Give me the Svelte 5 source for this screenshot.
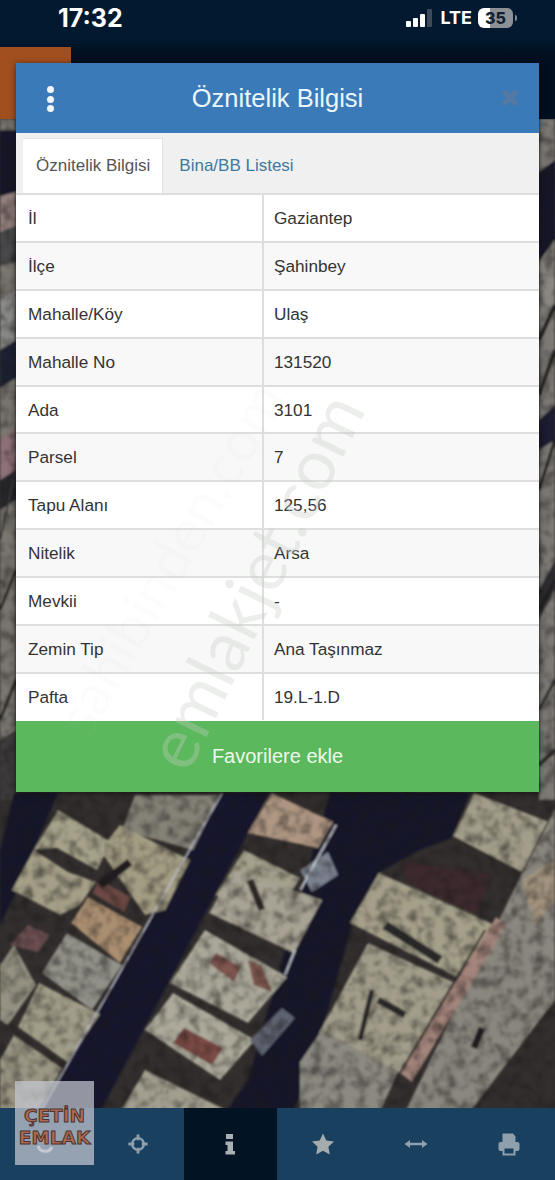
<script>
  const rows = [
    ['İl', 'Gaziantep'],
    ['İlçe', 'Şahinbey'],
    ['Mahalle/Köy', 'Ulaş'],
    ['Mahalle No', '131520'],
    ['Ada', '3101'],
    ['Parsel', '7'],
    ['Tapu Alanı', '125,56'],
    ['Nitelik', 'Arsa'],
    ['Mevkii', '-'],
    ['Zemin Tip', 'Ana Taşınmaz'],
    ['Pafta', '19.L-1.D']
  ];

  // map shapes, page coordinates
  const blocks = [
    // side strips
    ['0,119 16,119 16,800 0,800', '#7a7770'],
    ['539,119 555,119 555,800 539,800', '#7d7a74'],
    ['0,130 16,130 16,196 0,200', '#17172a'],
    ['0,196 16,192 16,226 0,232', '#93807c'],
    ['0,232 16,226 16,262 0,266', '#4a4a4c'],
    ['0,300 16,290 16,340 0,350', '#8a8a88'],
    ['0,350 16,340 16,378 0,388', '#1d2036'],
    ['0,440 16,428 16,470 0,480', '#8d7078'],
    ['0,480 16,470 16,500 0,510', '#26262a'],
    ['0,740 16,730 16,800 0,800', '#3c3a3a'],
    ['539,172 555,160 555,240 539,262', '#15182a'],
    ['539,262 555,240 555,300 539,320', '#8a8781'],
    ['539,420 555,405 555,440 539,450', '#1b1e30'],
    ['539,590 555,560 555,590 539,620', '#2f2f30'],
    // roads and shadow
    ['14,793 58,793 15,895 0,925 0,850', '#14182c'],
    ['222,793 269,793 100,1112 40,1112', '#15172d'],
    ['330,793 470,793 452,838 420,850 380,872 352,925 308,1080 292,1112 226,1112 248,1080', '#15172b'],
    // buildings, right
    ['453,837 474,793 549,822 522,873', '#a39e8a'],
    ['522,873 555,808 555,1000 470,1112 405,1112', '#8a877e'],
    ['522,880 555,860 555,900 535,925', '#a3947f'],
    ['350,923 379,873 495,925 457,977', '#a5a08a'],
    ['319,1033 368,943 455,983 400,1073', '#a39e8b'],
    ['400,1073 496,917 506,925 412,1082', '#a4857c'],
    ['300,1062 322,1030 398,1072 380,1112 300,1112', '#8c8a81'],
    ['400,860 490,875 478,915 410,885', '#3d2b2e'],
    // middle
    ['248,833 272,793 333,822 318,848', '#ae9682'],
    ['216,895 244,850 300,878 270,930', '#a5a18d'],
    ['300,870 328,852 338,875 312,892', '#7c8491'],
    ['209,913 234,870 322,900 294,953', '#a8a394'],
    ['170,983 205,930 287,977 248,1023', '#aba89a'],
    ['145,1030 173,993 255,1040 220,1080', '#adaa9b'],
    ['120,1112 145,1070 230,1112', '#a39f8f'],
    ['173,1043 184,1028 223,1048 212,1065', '#7d4b45'],
    ['209,963 216,953 241,967 234,982', '#80574f'],
    ['248,960 262,966 272,992 254,985', '#80594f'],
    ['250,1040 282,1008 295,1018 262,1056', '#5e6371'],
    // left
    ['135,795 219,795 193,850 122,830', '#858378'],
    ['100,850 120,825 190,860 165,910 145,915', '#a39d83'],
    ['58,810 111,842 97,870 57,848 34,850', '#a7a38b'],
    ['12,890 34,850 68,872 96,882 80,905 60,915', '#a49f87'],
    ['71,923 88,897 142,927 120,963', '#ab8f71'],
    ['92,893 99,880 131,897 124,912', '#6d4a45'],
    ['42,973 67,933 122,965 92,1010', '#939289'],
    ['18,1027 39,983 100,1014 67,1062', '#a19d88'],
    ['0,965 14,945 36,985 8,1025 0,1020', '#959283'],
    ['10,945 28,925 50,935 38,952', '#6a4d50'],
    ['0,1060 14,1035 62,1068 38,1112 0,1112', '#9c9784']
  ];

  const lines = [
    ['222,793 40,1112', '#c3c6d0', 1.5],
    ['336,825 300,890', '#c8ccd4', 2],
    ['295,950 285,975', '#c8ccd4', 2],
    ['522,873 556,806', '#39332f', 1.5],
    ['400,1073 485,930', '#2e2628', 2],
    ['453,837 522,873', '#2f2a28', 2],
    ['378,1000 405,1015', '#2a2a2c', 7],
    ['360,1040 372,990', '#2a2a2c', 5],
    ['250,880 262,910', '#2e2c2c', 7],
    ['482,1028 474,1048', '#211f22', 7],
    ['100,885 130,862', '#211f24', 8],
    ['385,925 440,960', '#2c2a2c', 9],
    ['0,610 16,570', '#222', 3],
    ['0,720 16,680', '#232323', 3],
    ['0,540 16,470', '#3a3a3a', 2],
    ['539,340 555,305', '#1f1f1f', 4],
    ['539,395 555,350', '#222', 4],
    ['539,490 555,440', '#1c1c1c', 3],
    ['539,610 555,580', '#1f1f1f', 3],
    ['539,765 555,750', '#2a2a2a', 4],
    ['539,710 555,680', '#2a2a2a', 3]
  ];
</script>

<div class="page">
  <svg class="map" viewBox="0 0 555 1180" width="555" height="1180" aria-hidden="true">
    <defs>
      <filter id="soft"><feGaussianBlur stdDeviation="1" /></filter>
      <filter id="mottle" x="0" y="0" width="100%" height="100%" color-interpolation-filters="sRGB">
        <feTurbulence type="fractalNoise" baseFrequency="0.09" numOctaves="3" seed="4" />
        <feColorMatrix values="0 0 0 0 0.1  0 0 0 0 0.09  0 0 0 0 0.09  1.2 0 0 0 -0.5" />
        <feGaussianBlur stdDeviation="0.8" />
      </filter>
    </defs>
    <rect width="555" height="1180" fill="#332f2e" />
    <g filter="url(#soft)">
      {#each blocks as [points, fill]}
        <polygon {points} {fill} />
      {/each}
      {#each lines as [points, stroke, width]}
        <polyline {points} {stroke} stroke-width={width} fill="none" />
      {/each}
    </g>
    <rect y="119" width="555" height="990" filter="url(#mottle)" />
  </svg>

  <div class="topbar">
    <span class="topbar__tab"></span>
  </div>

  <div class="status">
    <span class="status__time">17:32</span>
    <div class="status__right">
      <span class="bars"><i></i><i></i><i></i><i></i></span>
      <span class="status__lte">LTE</span>
      <span class="battery">35</span>
      <span class="battery__tip"></span>
    </div>
  </div>

  <section class="modal">
    <header class="modal__head">
      <span class="dots"><i></i><i></i><i></i></span>
      <h1>Öznitelik Bilgisi</h1>
      <svg class="close" viewBox="0 0 20 20" width="20" height="20" aria-hidden="true">
        <path d="M3.5 3.5 16.5 16.5M16.5 3.5 3.5 16.5" stroke="#5579a0" stroke-width="5" />
      </svg>
    </header>

    <div class="tabs">
      <span class="tab tab--active">Öznitelik Bilgisi</span>
      <span class="tab">Bina/BB Listesi</span>
    </div>

    <div class="rows">
      {#each rows as [label, value]}
        <div class="row">
          <span class="label">{label}</span>
          <span class="value">{value}</span>
        </div>
      {/each}
    </div>

    <button type="button">Favorilere ekle</button>
  </section>

  <nav class="nav">
    <span class="nav__item">
      <svg viewBox="0 0 24 24" width="24" height="24" aria-hidden="true">
        <path d="M5 14a7.500 7.500 0 0 0 14 1" fill="none" stroke="#c4cdd4" stroke-width="3" />
      </svg>
    </span>
    <span class="nav__item">
      <svg viewBox="0 0 24 24" width="20" height="20" aria-hidden="true">
        <circle cx="12" cy="12" r="7" fill="none" stroke="#8ea0ae" stroke-width="2.800" />
        <path d="M12 0.500v7M12 16.500v7M0.500 12h7M16.500 12h7" stroke="#8ea0ae" stroke-width="3.400" />
      </svg>
    </span>
    <span class="nav__item nav__item--active">
      <svg viewBox="0 0 24 24" width="24" height="24" aria-hidden="true">
        <path d="M8 2h7v5H8zM7.500 9.500H15V19h2v3.500H7.500V19h2v-6H7.500z" fill="#a9afb2" />
      </svg>
    </span>
    <span class="nav__item">
      <svg viewBox="0 0 24 24" width="24" height="24" aria-hidden="true">
        <path d="M12 1.500 15.300 8.500 23 9.500 17.400 14.800 18.800 22.500 12 18.800 5.200 22.500 6.600 14.800 1 9.500 8.700 8.500z" fill="#a5acaf" />
      </svg>
    </span>
    <span class="nav__item">
      <svg viewBox="0 0 24 24" width="24" height="24" aria-hidden="true">
        <path d="M0.500 12 6 8V10.800H18V8L23.500 12 18 16V13.200H6V16z" fill="#8ea0ae" />
      </svg>
    </span>
    <span class="nav__item">
      <svg viewBox="0 0 24 24" width="24" height="24" aria-hidden="true">
        <path d="M5.500 10V1.500h10.500l2.500 3V10M5.500 19H3.500a2 2 0 0 1-2-2v-5a2 2 0 0 1 2-2h17a2 2 0 0 1 2 2v5a2 2 0 0 1-2 2h-2" fill="#8ea0ae" />
        <path d="M6.500 15.500h11v7h-11z" fill="#1a4060" stroke="#8ea0ae" stroke-width="2" />
      </svg>
    </span>
  </nav>

  <div class="logo">
    <span>ÇETİN</span>
    <span>EMLAK</span>
  </div>

  <div class="mark mark--main">emlakjet.com</div>
  <div class="mark mark--faint">sahibinden.com</div>
</div>

<style>
  :global(body) {
    margin: 0;
    background: #021a30;
  }

  .page {
    position: relative;
    display: flex;
    flex-direction: column;
    width: 555px;
    height: 1180px;
    overflow: hidden;
    font-family: "Liberation Sans", Arial, sans-serif;
  }

  .map {
    position: absolute;
    inset: 0;
  }

  .topbar {
    position: absolute;
    top: 0;
    left: 0;
    width: 100%;
    height: 119px;
    background: linear-gradient(#02192f 0, #02192f 40px, #010f20 54px, #020f1f 100%);
  }

  .topbar__tab {
    position: absolute;
    top: 47px;
    left: 0;
    width: 71px;
    height: 72px;
    background: #a14f1f;
  }

  .status {
    position: relative;
    display: flex;
    justify-content: space-between;
    align-items: center;
    height: 35px;
    margin-bottom: 28px;
    padding: 0 38px 0 58px;
    color: #fff;
  }

  .status__time {
    font-family: Inter, sans-serif;
    font-size: 25px;
    font-weight: 700;
  }

  .status__right {
    display: flex;
    align-items: center;
  }

  .bars {
    display: flex;
    align-items: flex-end;
    gap: 2.500px;
    height: 18px;
    margin-right: 9px;
  }

  .bars i {
    width: 4.500px;
    background: #fff;
    border-radius: 1px;
  }

  .bars i:nth-child(1) { height: 6px; }
  .bars i:nth-child(2) { height: 9px; }
  .bars i:nth-child(3) { height: 13px; }
  .bars i:nth-child(4) { height: 18px; background: #3c4a5a; }

  .status__lte {
    margin-right: 6px;
    font-family: Inter, sans-serif;
    font-size: 18px;
    font-weight: 700;
  }

  .battery {
    width: 35px;
    height: 20px;
    border-radius: 6px;
    background: linear-gradient(90deg, #fff 0 35%, #8d9094 35%);
    color: #10202e;
    font-family: Inter, sans-serif;
    font-size: 16px;
    font-weight: 800;
    line-height: 20px;
    text-align: center;
  }

  .battery__tip {
    width: 2px;
    height: 6px;
    margin-left: 2px;
    background: #7f8a94;
    border-radius: 0 2px 2px 0;
  }

  .modal {
    position: relative;
    display: flex;
    flex-direction: column;
    width: 523px;
    margin-left: 16px;
    box-shadow: 0 1px 6px rgba(0, 0, 0, 0.55);
  }

  .modal__head {
    display: flex;
    align-items: center;
    justify-content: center;
    position: relative;
    height: 70px;
    background: #3a7ab8;
  }

  h1 {
    margin: 0;
    color: #eaf6fb;
    font-size: 25.500px;
    font-weight: 400;
  }

  .dots {
    position: absolute;
    left: 31px;
    top: 23px;
    display: flex;
    flex-direction: column;
    gap: 2.500px;
  }

  .dots i {
    width: 7px;
    height: 7px;
    border-radius: 50%;
    background: #f0f6fa;
  }

  .close {
    position: absolute;
    right: 19px;
    top: 25px;
  }

  .tabs {
    display: flex;
    align-items: flex-end;
    height: 60px;
    padding-left: 7px;
    background: #f0f0f0;
    box-sizing: border-box;
  }

  .tab {
    display: block;
    padding: 0 13px 0 16px;
    color: #41789f;
    font-size: 17px;
    line-height: 54px;
  }

  .tab--active {
    padding: 0 12px 0 13px;
    background: #fff;
    color: #555;
    border-right: 1px solid #e2e2e2;
    border-top: 1px solid #e6e6e6;
  }

  .rows {
    padding-bottom: 1px;
    background: #fff;
  }

  .row {
    display: grid;
    grid-template-columns: 248px 1fr;
    align-items: stretch;
    height: 47.900px;
    box-sizing: border-box;
    border-top: 2px solid #dedede;
    color: #333;
    font-size: 17.200px;
    line-height: 46px;
  }

  .row:nth-child(even) {
    background: #f8f8f8;
  }

  .label {
    padding-left: 12px;
    border-right: 2px solid #dedede;
  }

  .value {
    padding-left: 10px;
  }

  button {
    height: 71px;
    padding: 1px 0 0;
    border: none;
    background: #5cb85c;
    color: #eef8ec;
    font-family: inherit;
    font-size: 20px;
  }

  .nav {
    position: relative;
    display: grid;
    grid-template-columns: repeat(6, 1fr);
    height: 72px;
    margin-top: auto;
    margin-left: -1.500px;
    background: #1a4060;
  }

  .nav__item {
    display: flex;
    align-items: center;
    justify-content: center;
  }

  .nav__item--active {
    background: #021424;
  }

  .logo {
    position: absolute;
    left: 15px;
    top: 1081px;
    display: flex;
    flex-direction: column;
    align-items: center;
    justify-content: center;
    width: 79px;
    height: 84px;
    padding-top: 8px;
    box-sizing: border-box;
    background: rgba(196, 200, 208, 0.72);
    color: #b0694f;
    font-family: "DejaVu Sans", sans-serif;
    font-size: 18.500px;
    font-weight: 700;
    line-height: 22px;
    -webkit-text-stroke: 1px #4a3330;
  }

  .mark {
    position: absolute;
    white-space: nowrap;
    transform-origin: 0 50%;
    pointer-events: none;
    font-family: Lato, sans-serif;
  }

  .mark--main {
    left: 164px;
    top: 730px;
    color: rgba(200, 205, 200, 0.34);
    font-size: 70px;
    line-height: 66px;
    transform: rotate(-64deg);
  }

  .mark--faint {
    left: 70px;
    top: 700px;
    color: rgba(185, 190, 185, 0.05);
    font-size: 58px;
    line-height: 58px;
    transform: rotate(-60deg);
  }
</style>
